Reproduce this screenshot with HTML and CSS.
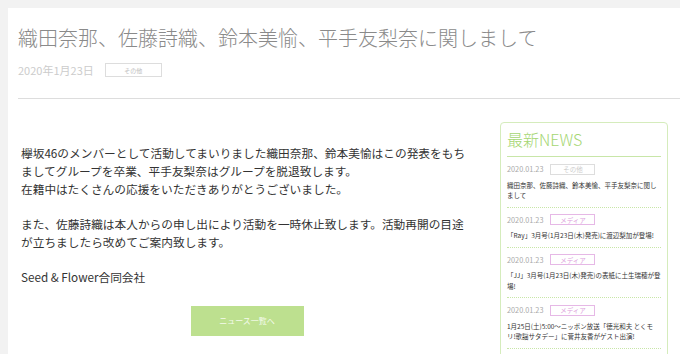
FILE: index.html
```html
<!DOCTYPE html>
<html lang="ja">
<head>
    <meta charset="UTF-8">
    <meta name="viewport" content="width=device-width, initial-scale=1.0">
    <title>織田奈那、佐藤詩織、鈴本美愉、平手友梨奈に関しまして</title>
    <link rel="stylesheet" href="styles.css">
</head>
<body>
    <div class="card">
        <div class="header">
            <h1 class="title">織田奈那、佐藤詩織、鈴本美愉、平手友梨奈に関しまして</h1>
            <div class="meta">
                <span class="date">2020年1月23日</span>
                <span class="tag">その他</span>
            </div>
        </div>

        <div class="content">
            <div class="article">
                <p>欅坂46のメンバーとして活動してまいりました織田奈那、鈴本美愉はこの発表をもちましてグループを卒業、平手友梨奈はグループを脱退致します。<br>在籍中はたくさんの応援をいただきありがとうございました。</p>
                <p>また、佐藤詩織は本人からの申し出により活動を一時休止致します。活動再開の目途が立ちましたら改めてご案内致します。</p>
                <p>Seed &amp; Flower合同会社</p>
                <div class="more">
                    <a class="more-btn" href="#">ニュース一覧へ</a>
                </div>
            </div>

            <div class="sidebar">
                <h2 class="side-title">最新NEWS</h2>
                <ul class="news">
                    <li>
                        <div class="news-meta"><span class="news-date">2020.01.23</span><span class="news-tag">その他</span></div>
                        <p class="news-text">織田奈那、佐藤詩織、鈴本美愉、平手友梨奈に関しまして</p>
                    </li>
                    <li>
                        <div class="news-meta"><span class="news-date">2020.01.23</span><span class="news-tag media">メディア</span></div>
                        <p class="news-text">「Ray」3月号(1月23日(木)発売)に渡辺梨加が登場!</p>
                    </li>
                    <li>
                        <div class="news-meta"><span class="news-date">2020.01.23</span><span class="news-tag media">メディア</span></div>
                        <p class="news-text">「JJ」3月号(1月23日(木)発売)の表紙に土生瑞穂が登場!</p>
                    </li>
                    <li>
                        <div class="news-meta"><span class="news-date">2020.01.23</span><span class="news-tag media">メディア</span></div>
                        <p class="news-text">1月25日(土)5:00～ニッポン放送「徳光和夫 とくモリ!歌謡サタデー」に菅井友香がゲスト出演!</p>
                    </li>
                    <li>
                        <div class="news-meta"><span class="news-date">2020.01.22</span><span class="news-tag media">メディア</span></div>
                        <p class="news-text">欅坂46関連情報</p>
                    </li>
                </ul>
            </div>
        </div>
    </div>
</body>
</html>
```

FILE: styles.css
```css
body {
    font-family: "Noto Sans CJK JP", "Noto Sans", sans-serif;
    background-color: #f2f2f2;
    margin: 0;
    padding: 8px 0 0 8px;
    color: #333;
}

.card {
    background: white;
    min-height: 600px;
}

.header {
    padding: 16px 0 0 10px;
}

.title {
    margin: 0;
    font-size: 20px;
    line-height: 28px;
    font-weight: 300;
    color: #8a8a8a;
    white-space: nowrap;
}

.meta {
    display: flex;
    align-items: center;
    height: 14px;
    margin-top: 11px;
    padding-bottom: 21px;
    border-bottom: 1px solid #ddd;
}

.date {
    font-size: 11px;
    color: #ccc;
}

.tag {
    display: inline-flex;
    align-items: center;
    justify-content: center;
    width: 55px;
    height: 12px;
    margin-left: 11px;
    border: 1px solid #ddd;
    font-size: 6px;
    color: #bbb;
}

.content {
    display: flex;
    align-items: flex-start;
}

.article {
    width: 452px;
    padding: 45px 0 0 13px;
    font-size: 11.7px;
    line-height: 18px;
}

.article p {
    margin: 0 0 17px;
}

.more {
    display: flex;
    justify-content: center;
    padding-top: 3px;
}

.more-btn {
    display: flex;
    align-items: center;
    justify-content: center;
    width: 113px;
    height: 30px;
    background-color: #bde08f;
    color: #f4fbec;
    font-size: 8px;
    text-decoration: none;
}

.sidebar {
    width: 154px;
    margin: 23px 12px 0 auto;
    padding: 0 6px;
    border: 1px solid #d5ecbc;
    border-radius: 4px;
}

.side-title {
    margin: 0;
    padding: 6px 0 7px;
    font-size: 16px;
    line-height: 20px;
    font-weight: 300;
    color: #a5d672;
    border-bottom: 1px solid #c8e6a8;
}

.news {
    list-style: none;
    margin: 0;
    padding: 0;
}

    .news li {
        padding: 7px 0 6px;
        border-bottom: 1px dotted #c8e6a8;
    }

.news-meta {
    display: flex;
    align-items: center;
    height: 10px;
}

.news-date {
    font-size: 7.3px;
    color: #aaa;
}

.news-tag {
    display: inline-flex;
    align-items: center;
    justify-content: center;
    width: 43px;
    height: 9px;
    margin-left: 7px;
    border: 1px solid #ddd;
    font-size: 6.5px;
    color: #ccc;
}

    .news-tag.media {
        border-color: #e6b8e6;
        color: #dca2dc;
    }

.news-text {
    margin: 5.5px 0 0;
    font-size: 6.5px;
    line-height: 10.5px;
    color: #333;
}
```
